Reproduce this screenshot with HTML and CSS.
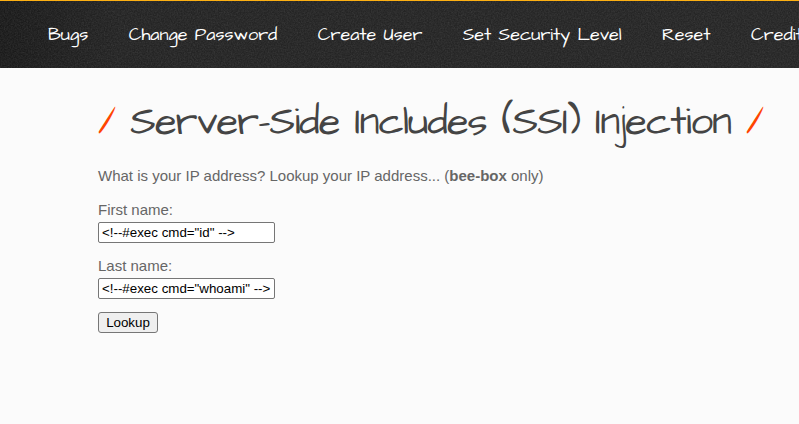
FILE: index.html
```html
<!DOCTYPE html>
<html lang="en">
<head>
<meta charset="utf-8">
<title>Server-Side Includes (SSI) Injection</title>
<link rel="stylesheet" href="styles.css">
</head>
<body>
<nav class="menu">
  <svg class="grain" aria-hidden="true">
    <filter id="grain" x="0" y="0" width="100%" height="100%">
      <feTurbulence type="fractalNoise" baseFrequency="0.7" numOctaves="2" seed="4"/>
      <feColorMatrix values="0 0 0 0 1  0 0 0 0 1  0 0 0 0 1  1 1 0 0 -.7"/>
    </filter>
    <rect width="100%" height="100%" filter="url(#grain)"/>
  </svg>
  <a href="#">Bugs</a>
  <a href="#">Change Password</a>
  <a href="#">Create User</a>
  <a href="#">Set Security Level</a>
  <a href="#">Reset</a>
  <a href="#">Credits</a>
</nav>
<main>
  <h1><span class="slash">/</span> Server-Side Includes (SSI) Injection <span class="slash">/</span></h1>
  <p class="intro">What is your IP address? Lookup your IP address... (<b>bee-box</b> only)</p>
  <form>
    <label for="first">First name:</label>
    <input id="first" type="text" value='&lt;!--#exec cmd="id" --&gt;'>
    <label for="last">Last name:</label>
    <input id="last" type="text" value='&lt;!--#exec cmd="whoami" --&gt;'>
    <button type="button">Lookup</button>
  </form>
</main>
</body>
</html>
```
FILE: styles.css
```css
* { box-sizing: border-box; }
body {
  margin: 0;
  height: 424px;
  overflow: hidden;
  background: #fbfbfb;
  color: #666;
  font: 15px/20px "Liberation Sans", Arial, sans-serif;
}
.menu {
  position: relative;
  display: flex;
  gap: 40.45px;
  height: 68px;
  padding: 19px 0 0 48px;
  overflow: hidden;
  border-top: 1px solid #fdb013;
  background: linear-gradient(90deg, #1a1a1a, #242424 120px, #262626);
}
.menu a {
  position: relative;
  flex: none;
  color: #fff;
  font: 18px/30px "Architects Daughter", Lato, sans-serif;
  text-decoration: none;
  white-space: nowrap;
}
.grain {
  position: absolute;
  inset: 0;
  width: 100%;
  height: 100%;
  opacity: .1;
}
main { padding: 26px 0 0 98px; }
h1 {
  margin: 0;
  height: 60px;
  color: #444;
  font: 40px/58px "Architects Daughter", Lato, sans-serif;
  letter-spacing: -1px;
  white-space: nowrap;
}
.slash { color: #ff4500; }
.intro { margin: 12px 0 14px; }
form { display: flex; flex-direction: column; align-items: flex-start; }
label { height: 22px; }
input {
  width: 177px;
  height: 21px;
  margin: 0 0 13px;
  padding: 1px 3px;
  border: 1px solid #767676;
  border-radius: 2px;
  background: #fff;
  color: #000;
  font: 13.333px "Liberation Sans", Arial, sans-serif;
}
button {
  width: 60px;
  height: 21px;
  padding: 0;
  border: 1px solid #767676;
  border-radius: 3px;
  background: #efefef;
  color: #000;
  font: 13.333px "Liberation Sans", Arial, sans-serif;
}
```
